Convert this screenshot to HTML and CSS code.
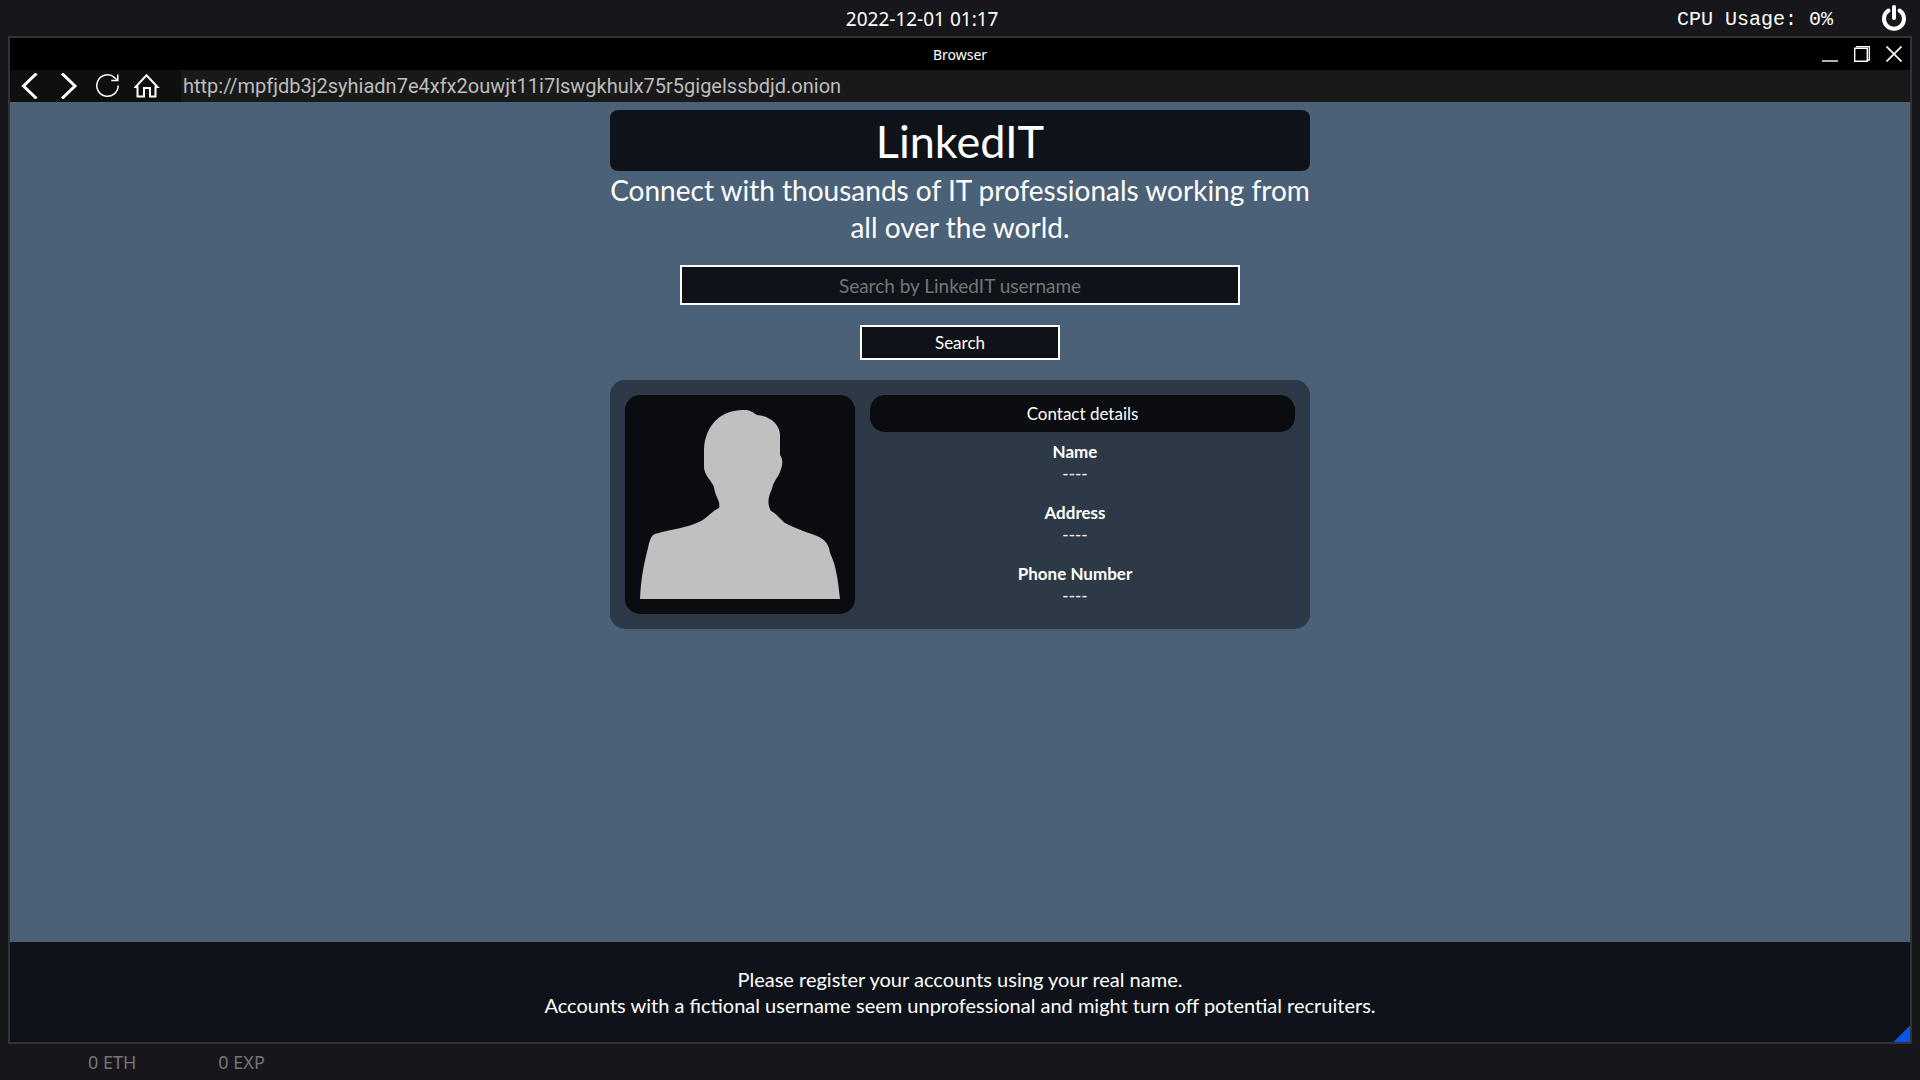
FILE: index.html
```html
<!DOCTYPE html>
<html lang="en">

<head>
  <meta charset="UTF-8" />
  <meta name="viewport" content="width=device-width, initial-scale=1.0" />
  <title>Browser</title>
  <link rel="stylesheet" href="styles.css">
</head>

<body>
  <header class="topbar">
    <time class="clock" datetime="2022-12-01T01:17">2022-12-01 01:17</time>
    <div class="status">
      <span class="cpu">CPU Usage: 0%</span>
      <button class="power" aria-label="Power">
        <svg width="26" height="28" viewBox="0 0 26 28" fill="none" stroke="#fff" stroke-width="4" stroke-linecap="round">
          <path d="M13 3v11" />
          <path d="M7.5 6.5a10 10 0 1 0 11 0" />
        </svg>
      </button>
    </div>
  </header>

  <main class="window">
    <div class="titlebar">
      <span class="window-title">Browser</span>
      <div class="window-buttons">
        <button aria-label="Minimize">
          <svg width="16" height="16" viewBox="0 0 16 16"><path d="M0 15h16" stroke="#fff" stroke-width="1.4" /></svg>
        </button>
        <button aria-label="Maximize">
          <svg width="16" height="16" viewBox="0 0 16 16" fill="none" stroke="#fff">
            <path d="M.7 2.3h12.6v13H.7z" stroke-width="1.4" />
            <path d="M2 .7h13.3V14h-2" stroke-width="1.3" />
          </svg>
        </button>
        <button aria-label="Close">
          <svg width="16" height="16" viewBox="0 0 16 16"><path d="M.5.5l15 15M15.5.5l-15 15" stroke="#fff" stroke-width="1.7" /></svg>
        </button>
      </div>
    </div>

    <nav class="navbar">
      <div class="nav-buttons">
        <button aria-label="Back">
          <svg width="26" height="26" viewBox="0 0 26 26" fill="none" stroke="#fff" stroke-width="3"><path d="M19.5.5L6.5 13l13 12.5" /></svg>
        </button>
        <button aria-label="Forward">
          <svg width="26" height="26" viewBox="0 0 26 26" fill="none" stroke="#fff" stroke-width="3"><path d="M6 .5L19 13 6 25.5" /></svg>
        </button>
        <button aria-label="Reload">
          <svg width="26" height="26" viewBox="0 0 26 26" fill="none" stroke="#fff" stroke-width="1.5">
            <path d="M23.2 12.5A10.7 10.7 0 1 1 19.5 4.5l2.5 2.5" />
            <path d="M22.8 1.5v6h-6.5" />
          </svg>
        </button>
        <button aria-label="Home">
          <svg width="26" height="26" viewBox="0 0 26 26" fill="none" stroke="#fff" stroke-width="2">
            <path d="M3.5 14h-2L12.5 2.3 23.5 14h-2v9.5H16V15h-6v8.5H3.5z" />
          </svg>
        </button>
      </div>
      <input class="url" type="text" aria-label="Address bar" value="http://mpfjdb3j2syhiadn7e4xfx2ouwjt11i7lswgkhulx75r5gigelssbdjd.onion">
    </nav>

    <section class="page">
      <h1>LinkedIT</h1>
      <p class="tagline">Connect with thousands of IT professionals working from all over the world.</p>

      <form class="search">
        <input type="text" aria-label="LinkedIT username" placeholder="Search by LinkedIT username">
        <button type="button">Search</button>
      </form>

      <div class="card">
        <div class="avatar">
          <svg viewBox="0 0 200 189" role="img" aria-label="Profile picture">
            <path fill="#c0c0c0" d="M0 189C1 168 4 153 8 138C10 128 12 125 15 124C32 119 48 118 61 111C68 107 72 101 79 98C81 91 75 87 74 77C71 70 65 66 64 58V40C65 14 82 0 103 0C111 0 112 2 117 5C130 6 139 14 140 24V45C144 50 142 57 140 62C137 69 133 72 132 79C128 87 127 94 131 101C137 104 140 109 145 113C157 119 169 123 177 126C186 130 189 135 190 143C196 155 198 170 200 189Z" />
          </svg>
        </div>
        <div class="details">
          <h2>Contact details</h2>
          <dl>
            <div><dt>Name</dt><dd>----</dd></div>
            <div><dt>Address</dt><dd>----</dd></div>
            <div><dt>Phone Number</dt><dd>----</dd></div>
          </dl>
        </div>
      </div>
    </section>

    <footer class="notice">
      <p>Please register your accounts using your real name.<br>Accounts with a fictional username seem unprofessional and might turn off potential recruiters.</p>
    </footer>
    <span class="resize"></span>
  </main>

  <footer class="bottombar">
    <span>0 ETH</span>
    <span>0 EXP</span>
  </footer>
</body>

</html>
```
FILE: styles.css
```css
* {
  box-sizing: border-box;
  margin: 0;
  padding: 0;
}

body {
  display: flex;
  flex-direction: column;
  min-height: 100vh;
  background: #17161b;
  color: #fff;
  font-family: 'Noto Sans', sans-serif;
}

button {
  border: none;
  background: none;
  color: inherit;
  cursor: pointer;
}

svg {
  display: block;
}

/* system bars */
.topbar {
  display: grid;
  grid-template-columns: 11fr auto 12fr;
  align-items: center;
  height: 36px;
  padding: 0 13px;
}

.clock {
  grid-column: 2;
  padding-top: 2px;
  font-size: 19px;
}

.status {
  display: flex;
  align-items: center;
  justify-content: flex-end;
  gap: 48px;
}

.cpu {
  padding-top: 2px;
  font-family: 'Liberation Mono', monospace;
  font-size: 20px;
}

.bottombar {
  display: flex;
  align-items: center;
  gap: 82px;
  height: 36px;
  padding: 0 88px;
  color: #75757a;
  font-size: 18px;
}

/* window */
.window {
  position: relative;
  display: flex;
  flex-direction: column;
  flex: 1;
  margin: 0 8px;
  border: 2px solid #333336;
}

.titlebar {
  display: grid;
  grid-template-columns: 1fr auto 1fr;
  align-items: center;
  height: 32px;
  padding: 0 8px;
  background: #000;
}

.window-title {
  grid-column: 2;
  font-size: 14px;
}

.window-buttons {
  display: flex;
  justify-content: flex-end;
  gap: 16px;
}

.navbar {
  display: flex;
  height: 32px;
  background: #191919;
}

.nav-buttons {
  display: flex;
  align-items: center;
  gap: 13px;
  padding: 0 21px 0 7px;
  background: #0f0f0f;
}

.url {
  flex: 1;
  border: none;
  padding: 0 2px;
  background: #191919;
  color: #bdbdbd;
  font-family: Roboto, sans-serif;
  font-size: 20px;
}

.resize {
  position: absolute;
  right: 0;
  bottom: 0;
  width: 16px;
  height: 16px;
  background: linear-gradient(135deg, transparent 50%, #0557e0 50%);
}

/* site */
.page {
  display: flex;
  flex-direction: column;
  align-items: center;
  flex: 1;
  padding: 8px;
  background: #4b6178;
  font-family: Lato, sans-serif;
}

h1 {
  width: 100%;
  max-width: 700px;
  padding-top: 1px;
  border-radius: 8px;
  background: #0f1319;
  font-size: 45px;
  font-weight: 400;
  line-height: 60px;
  text-align: center;
}

.tagline {
  max-width: 700px;
  padding-top: 1px;
  font-size: 28px;
  line-height: 37px;
  text-align: center;
}

.search {
  display: flex;
  flex-direction: column;
  align-items: center;
  gap: 20px;
  width: 100%;
  max-width: 560px;
  margin: 19px 0 20px;
}

.search input,
.search button {
  border: 2px solid #fff;
  background: #0f1319;
  color: #fff;
  font-family: inherit;
  text-align: center;
}

.search input {
  width: 100%;
  height: 40px;
  font-size: 19px;
}

.search input::placeholder {
  color: #757575;
}

.search button {
  width: 200px;
  height: 35px;
  font-size: 17px;
}

.card {
  display: flex;
  gap: 15px;
  width: 100%;
  max-width: 700px;
  padding: 15px;
  border-radius: 15px;
  background: #2e3947;
}

.avatar {
  width: 230px;
  padding: 15px;
  border-radius: 15px;
  background: #0a0c0f;
}

.details {
  flex: 1;
  font-size: 17px;
  text-align: center;
}

h2 {
  border-radius: 15px;
  background: #0a0c0f;
  font-size: 17px;
  font-weight: 400;
  line-height: 37px;
}

dl {
  display: grid;
  gap: 17px;
  padding: 9px 15px 0 0;
  line-height: 22px;
}

dt {
  font-weight: 700;
}

.notice {
  display: flex;
  align-items: center;
  justify-content: center;
  height: 100px;
  background: #0f1319;
  font-family: Lato, sans-serif;
  font-size: 20px;
  line-height: 26px;
  text-align: center;
}
```
